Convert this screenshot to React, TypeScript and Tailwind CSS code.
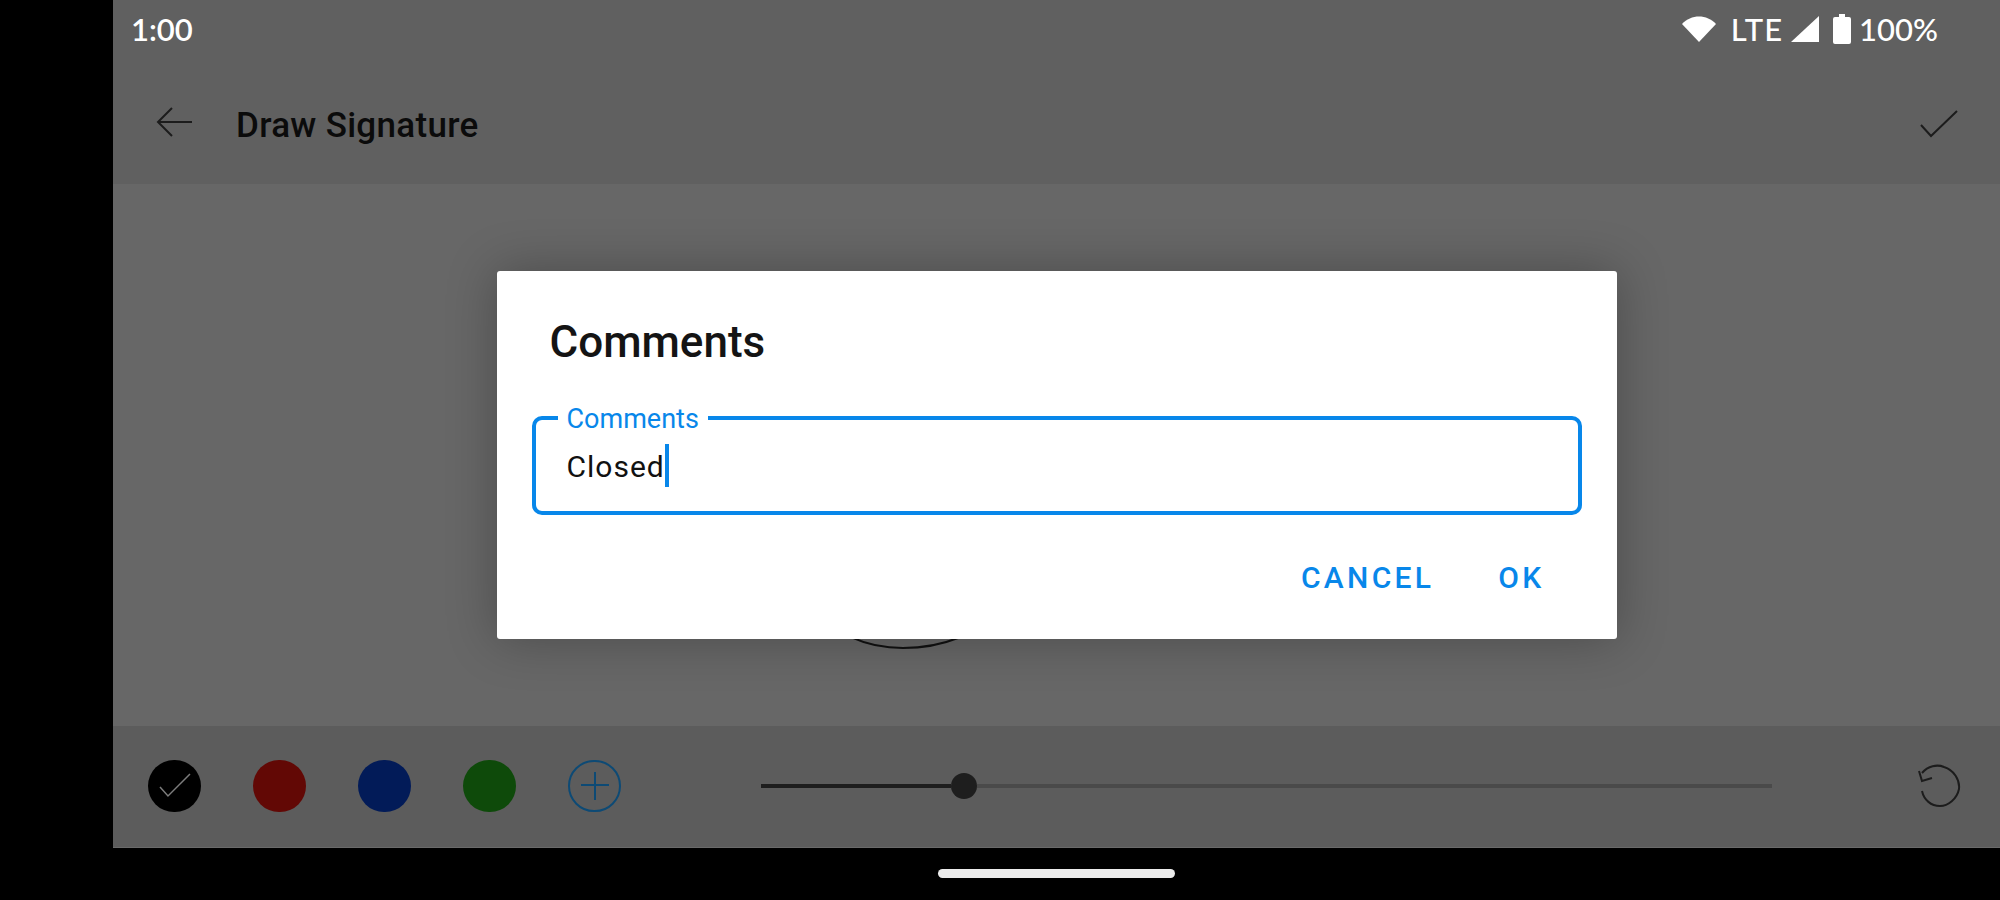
const ROBOTO = "font-['Roboto',sans-serif]";

function StatusBar() {
  return (
    <div className="flex h-[56px] items-center justify-between pl-[18px] pr-[62px] pt-[2px] text-white">
      <span className="font-['Lato',sans-serif] text-[31px] leading-none font-semibold">1:00</span>
      <div className="flex items-center font-['Lato',sans-serif] text-[31px] leading-none font-medium">
        <svg width="34" height="28" viewBox="0 0 34 28" className="mr-[15px]">
          <path d="M0 9 C9 -1 25 -1 34 9 L17 27 Z" fill="#fff" />
        </svg>
        <span className="mr-[8px] tracking-[1px]">LTE</span>
        <svg width="28" height="28" viewBox="0 0 28 28" className="mr-[14px]">
          <path d="M0 27 L28 1 V27 Z" fill="#fff" />
        </svg>
        <svg width="18" height="30" viewBox="0 0 18 30" className="mr-[8px]">
          <path d="M6 0 H12 V3 H16 Q18 3 18 5 V28 Q18 30 16 30 H2 Q0 30 0 28 V5 Q0 3 2 3 H6 Z" fill="#fff" />
        </svg>
        <span>100%</span>
      </div>
    </div>
  );
}

function Header() {
  return (
    <div className="flex h-[128px] items-start pl-[43px] pr-[42px]">
      <svg width="36" height="30" viewBox="0 0 36 30" className="mt-[51px]" fill="none" stroke="#1c1c1c" strokeWidth="2">
        <path d="M36 15 H2 M16 1 L2 15 L16 29" />
      </svg>
      <span className={`${ROBOTO} ml-[44px] mt-[50px] text-[35px] leading-[40px] font-medium tracking-[0.3px] text-[#0b0b0b]`}>Draw Signature</span>
      <svg width="38" height="28" viewBox="0 0 38 28" className="ml-auto mt-[54px]" fill="none" stroke="#1c1c1c" strokeWidth="2">
        <path d="M1 15 L11 26 L37 1" />
      </svg>
    </div>
  );
}

function Swatch({ color }: { color: string }) {
  return <div className="h-[52px] w-[53px] shrink-0 rounded-full" style={{ backgroundColor: color }} />;
}

function Toolbar() {
  return (
    <div className="flex h-[122px] items-center border-b border-[#6a6a6a] pb-[2px] pl-[35px] pr-[38px]">
      <div className="flex items-center gap-[52px]">
        <div className="flex h-[52px] w-[53px] items-center justify-center rounded-full bg-black">
          <svg width="32" height="26" viewBox="0 0 32 26" fill="none" stroke="#7c7c7c" strokeWidth="1.5">
            <path d="M1 14 L9 23 L31 1" />
          </svg>
        </div>
        <Swatch color="#620805" />
        <Swatch color="#021b58" />
        <Swatch color="#0e4a0a" />
        <div className="flex h-[52px] w-[53px] items-center justify-center rounded-full border-2 border-[#0d4a75]">
          <svg width="28" height="28" viewBox="0 0 28 28" stroke="#0d4a75" strokeWidth="2">
            <path d="M0 13 H28 M14 0 V28" />
          </svg>
        </div>
      </div>
      <div className="ml-[140px] flex w-[1011px] items-center">
        <div className="h-[4px] w-[190px] bg-[#1e1e1e]" />
        <div className="h-[26px] w-[26px] shrink-0 rounded-full bg-[#1e1e1e]" />
        <div className="h-[4px] flex-1 bg-[#4a4a4a]" />
      </div>
      <svg width="44" height="44" viewBox="0 0 44 44" className="ml-auto" fill="none" stroke="#1c1c1c" strokeWidth="2">
        <path d="M4 9 C10 2 19 0 26 3 C36 6 42 16 41 25 C39 35 30 42 22 42 C13 42 6 36 4 27" />
        <path d="M1 7 L4 17 L14 14" />
      </svg>
    </div>
  );
}

function CommentsDialog() {
  return (
    <div className="absolute inset-0 flex justify-center pl-[113px] pt-[271px]">
      <div className={`${ROBOTO} flex h-[368px] w-[1120px] flex-col rounded-[3px] bg-white shadow-[0_0_50px_rgba(0,0,0,0.28)]`}>
        <div className="pl-[53px] pt-[46px] text-[44px] leading-[50px] font-medium text-[#141414]">Comments</div>
        <div className="relative mx-[35px] mt-[49px] h-[99px] rounded-[10px] border-[4px] border-[#0887ea] pl-[31px] pt-[24px]">
          <span className="absolute left-[22px] top-[-17px] bg-white px-[9px] text-[27px] leading-[32px] text-[#0887ea]">Comments</span>
          <div className="flex h-[43px] items-center pt-[2px] text-[30px] leading-none tracking-[1px] text-[#111]">
            Closed
            <span className="mt-[-2px] h-[43px] w-[4px] bg-[#0887ea]" />
          </div>
        </div>
        <div className="mt-[48px] flex justify-end gap-[64px] pr-[72px] text-[30px] leading-[30px] font-medium tracking-[3.3px] text-[#0887ea]">
          <span>CANCEL</span>
          <span>OK</span>
        </div>
      </div>
    </div>
  );
}

export default function App() {
  return (
    <div className="relative flex h-[900px] w-[2000px] overflow-hidden bg-black">
      <div className="w-[113px] shrink-0" />
      <div className="flex h-[848px] flex-1 flex-col">
        <div className="bg-[#606060]">
          <StatusBar />
          <Header />
        </div>
        <div className="relative flex-1 bg-[#676767]">
          <svg className="absolute left-[740px] top-[440px]" width="110" height="30" viewBox="0 0 110 30" fill="none" stroke="#111" strokeWidth="2">
            <path d="M0 14 C15 21 30 24 50 24 C75 24 90 20 105 14" />
          </svg>
        </div>
        <div className="bg-[#5c5c5c]">
          <Toolbar />
        </div>
      </div>
      <CommentsDialog />
      <div className="absolute bottom-[22px] left-[938px] h-[9px] w-[237px] rounded-full bg-[#ececec]" />
    </div>
  );
}
